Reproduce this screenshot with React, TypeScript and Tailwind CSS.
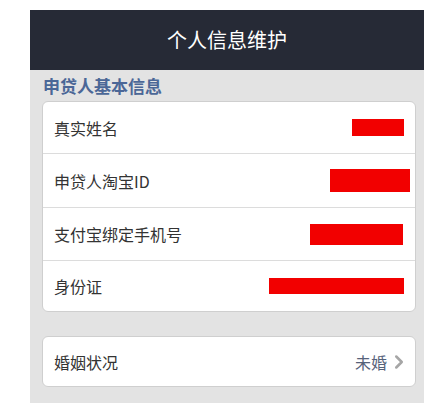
import { ChevronRight } from 'lucide-react';

const rows = [
  { label: '真实姓名', w: 'w-[52px]', h: 'h-[17px]', mr: 'mr-[11px]', rowH: 'h-[51px]' },
  { label: '申贷人淘宝ID', w: 'w-[80px]', h: 'h-[23px]', mr: 'mr-[5px]', rowH: 'h-[54px]' },
  { label: '支付宝绑定手机号', w: 'w-[93px]', h: 'h-[21px]', mr: 'mr-[12px]', rowH: 'h-[53px]' },
  { label: '身份证', w: 'w-[135px]', h: 'h-[16px]', mr: 'mr-[11px]', rowH: 'h-[51px]' },
];

export default function App() {
  return (
    <div
      className="w-[424px] h-[403px] bg-white pt-[10px] pl-[30px] overflow-hidden"
      style={{ fontFamily: '"Noto Sans CJK SC", "Noto Sans", sans-serif' }}
    >
      <div className="h-[393px] bg-[#e3e3e3]">
        <header className="h-[60px] bg-[#262a36] flex items-center justify-center">
          <h1 className="text-white text-[20px] leading-none">个人信息维护</h1>
        </header>

        <div className="h-[31px] flex items-center px-[13px]">
          <h2 className="text-[#4b6797] text-[17px] font-bold leading-none">申贷人基本信息</h2>
        </div>

        <div className="ml-[12px] mr-[8px] bg-white rounded-[6px] border border-[#cfcfcf]">
          {rows.map((r, i) => (
            <div
              key={r.label}
              className={`${r.rowH} flex items-center justify-between pl-[11px] ${i > 0 ? 'border-t border-[#dcdcdc]' : ''}`}
            >
              <span className="text-[16px] text-[#333333] leading-none">{r.label}</span>
              <span className={`${r.w} ${r.h} ${r.mr} bg-[#f20000]`} />
            </div>
          ))}
        </div>

        <div className="mt-[24px] ml-[12px] mr-[8px] h-[51px] bg-white rounded-[6px] border border-[#cfcfcf] flex items-center justify-between pl-[11px] pr-[11px]">
          <span className="text-[16px] text-[#333333] leading-none">婚姻状况</span>
          <span className="flex items-center gap-[1px]">
            <span className="text-[16px] text-[#56627a] leading-none">未婚</span>
            <ChevronRight className="w-[22px] h-[22px] text-[#a6a6a6] -mr-[6px]" strokeWidth={2.75} />
          </span>
        </div>
      </div>
    </div>
  );
}
